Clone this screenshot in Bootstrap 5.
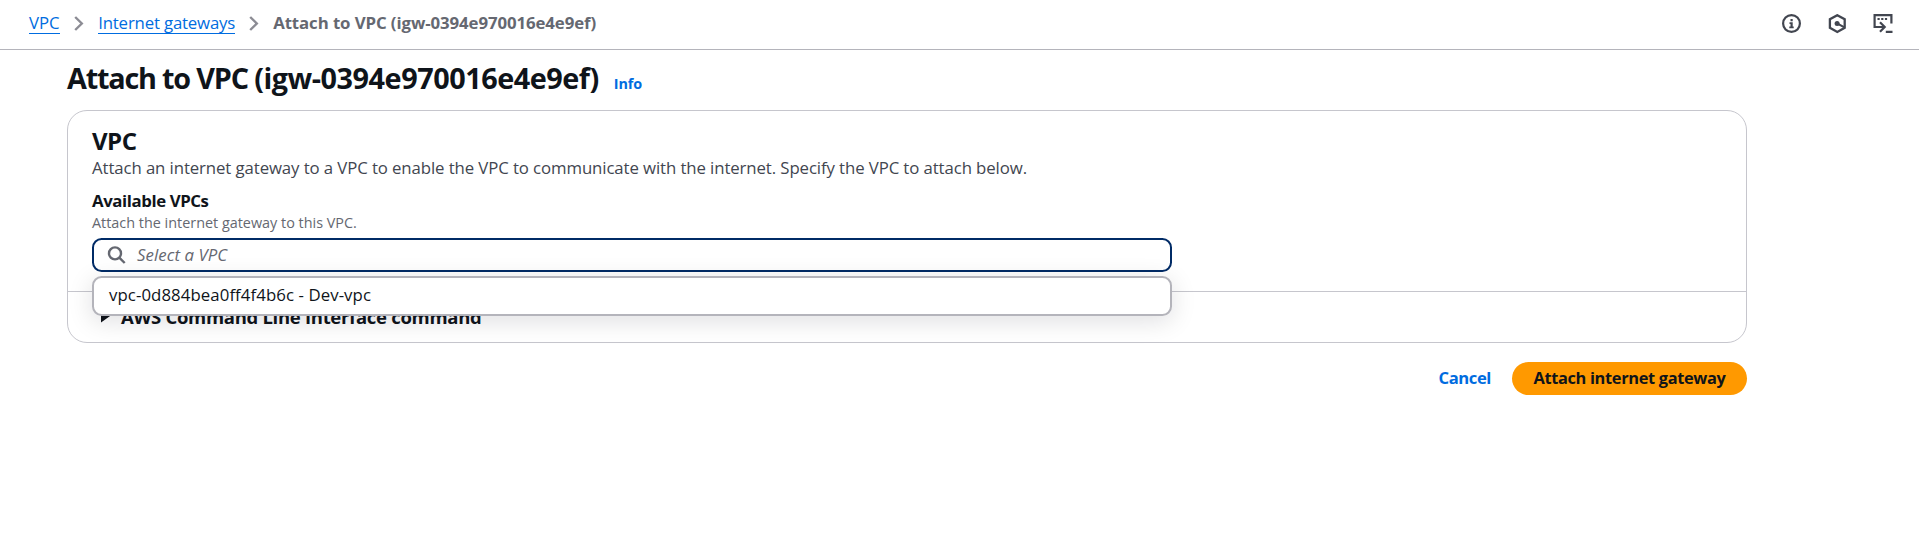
<!DOCTYPE html>
<html lang="en">
<head>
<meta charset="utf-8">
<meta name="viewport" content="width=device-width, initial-scale=1">
<title>Attach to VPC</title>
<link href="https://cdn.jsdelivr.net/npm/bootstrap@5.3.0/dist/css/bootstrap.min.css" rel="stylesheet">
<script src="https://cdn.jsdelivr.net/npm/bootstrap@5.3.0/dist/js/bootstrap.bundle.min.js"></script>
<style>
body{font-family:"Open Sans","Noto Sans",sans-serif;font-size:16.8px;line-height:23px;color:#0f141a;background:#fff;overflow:hidden}
svg{display:block;flex:none}
.topbar{height:50px;padding:12px 26px 0 29px;border-bottom:1px solid #b4b4bb}
.crumbs{line-height:21px}
.crumbs a{color:#006ce0;border-bottom:1px solid #006ce0;text-decoration:none}
.crumbs a.ig{letter-spacing:-.17px}
.crumbs .here{color:#656871;font-weight:700;letter-spacing:-.08px;margin-left:-1px}
.crumbs .chev{margin:4px 15px 0 14px}
.crumbs .ig{margin-left:-.5px}
.tools{color:#424650;padding-top:2px;gap:26px}
.page{width:1680px;margin-left:67px;padding-top:10px}
.title{font-size:28.8px;line-height:36px;font-weight:700;letter-spacing:-.46px}
.title .lead-words{letter-spacing:-1.2px}
.info{font-size:14.4px;font-weight:700;color:#006ce0;letter-spacing:-.1px;margin-left:15px}
.panel{margin-top:14px;border:1px solid #c6c6cd;border-radius:20px}
.panel-main{padding:15px 24px 19px 24px}
.panel h2{font-size:24px;line-height:30px;font-weight:700;letter-spacing:-.5px}
.desc{color:#424650;letter-spacing:-.1px}
.avail{font-weight:700;letter-spacing:-.4px;margin-top:10px}
.hint{font-size:14.4px;line-height:20px;color:#656871;padding-top:1px;height:20px}
.picker{width:1080px;margin-top:6px}
.field{height:34px;border:2px solid #002b66;border-radius:9.6px;padding:0 13px;color:#656871;font-style:italic}
.field span{margin-left:2px;padding-bottom:2px;letter-spacing:.08px}
.options{top:38px;left:0;width:100%;height:40px;border:2px solid #b4b4bb;border-radius:9.6px;background:#fff;box-shadow:0 5px 24px 1px rgba(0,7,22,.12);padding:0 15px 3px;z-index:2;letter-spacing:.08px}
.cli{height:51px;border-top:1px solid #c6c6cd;padding:0 0 2px 32px;font-size:18.5px;font-weight:700;letter-spacing:-.3px}
.cli svg{margin-right:9px}
.actions{margin-top:19px}
.actions a{color:#006ce0;font-size:16.6px;font-weight:700;letter-spacing:-.4px;text-decoration:none;margin-right:21px;padding-bottom:2px}
.actions .go{width:235px;height:33px;padding:0 0 2px;border:0;border-radius:24px;background:#ff9900;color:#0f141a;font-size:16.4px;line-height:23px;font-weight:700;letter-spacing:-.34px}
</style>
</head>
<body>
<header class="topbar d-flex justify-content-between align-items-start">
  <nav class="crumbs d-flex align-items-start">
    <a href="#">VPC</a>
    <svg class="chev" width="10" height="15" viewBox="0 0 10 15" fill="none" stroke="#8c8c94" stroke-width="2.4"><path d="M1.2 1l6.6 6.5L1.2 14"/></svg>
    <a class="ig" href="#">Internet gateways</a>
    <svg class="chev" width="10" height="15" viewBox="0 0 10 15" fill="none" stroke="#8c8c94" stroke-width="2.4"><path d="M1.2 1l6.6 6.5L1.2 14"/></svg>
    <span class="here">Attach to VPC (igw-0394e970016e4e9ef)</span>
  </nav>
  <div class="tools d-flex">
    <svg width="20" height="20" viewBox="0 0 20 20"><circle cx="10.500" cy="9.500" r="8.400" fill="none" stroke="currentColor" stroke-width="2.200"/><path fill="currentColor" d="M9.500 5h2.200v2.200H9.500zM8.500 8.300h3.200v4.200h1v1.800H8.300v-1.800h1.200v-2.400h-1z"/></svg>
    <svg width="20" height="20" viewBox="0 0 20 20"><path d="M10.300 1.200l7.400 4.100v8.500l-7.400 4.200-7.400-4.200V5.300z" fill="none" stroke="currentColor" stroke-width="2.300"/><circle cx="10.100" cy="9.400" r="2.500" fill="currentColor"/><path d="M10.500 9.600l6.500 3.500" stroke="currentColor" stroke-width="2.200"/></svg>
    <svg width="20" height="20" viewBox="0 0 20 20" fill="none" stroke="currentColor" stroke-width="2.200"><path d="M5.500 13H1.600V1.100h16.800V9.500"/><path d="M4.500 4.900h2.200M8.200 4.900h2.200M11.900 4.900h2.200" stroke-width="2"/><path d="M5 13h6.500M7 8.300l4.700 4.700L7 17.700M12.800 17.900h6.700"/></svg>
  </div>
</header>
<main class="page">
  <div class="d-flex align-items-baseline">
    <h1 class="title mb-0"><span class="lead-words">Attach to VPC </span>(igw-0394e970016e4e9ef)</h1>
    <a class="info text-decoration-none" href="#">Info</a>
  </div>
  <section class="panel">
    <div class="panel-main">
      <h2 class="mb-0">VPC</h2>
      <p class="desc mb-0">Attach an internet gateway to a VPC to enable the VPC to communicate with the internet. Specify the VPC to attach below.</p>
      <div class="avail">Available VPCs</div>
      <div class="hint">Attach the internet gateway to this VPC.</div>
      <div class="picker position-relative">
        <div class="field d-flex align-items-center">
          <svg class="me-2" width="20" height="20" viewBox="0 0 20 20" fill="none" stroke="#656871" stroke-width="2.400"><circle cx="8" cy="8.400" r="6"/><path d="M12.300 12.700l5.400 5.300"/></svg>
          <span>Select a VPC</span>
        </div>
        <div class="options position-absolute d-flex align-items-center">vpc-0d884bea0ff4f4b6c - Dev-vpc</div>
      </div>
    </div>
    <div class="cli d-flex align-items-center">
      <svg width="12" height="14" viewBox="0 0 12 14" fill="#0f141a"><path d="M1 0l10.500 6L1 13.500z"/></svg>
      <span>AWS Command Line Interface command</span>
    </div>
  </section>
  <div class="actions d-flex justify-content-end align-items-center">
    <a href="#">Cancel</a>
    <button class="go btn">Attach internet gateway</button>
  </div>
</main>
</body>
</html>
